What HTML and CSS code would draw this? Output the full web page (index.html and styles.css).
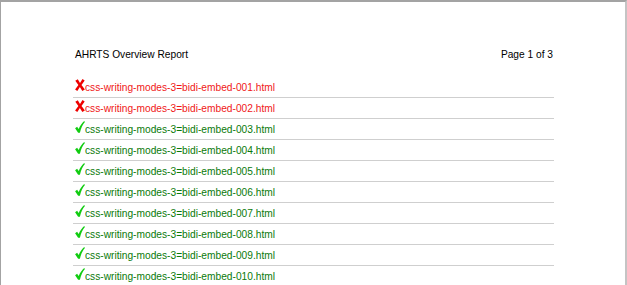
FILE: index.html
```html
<!DOCTYPE html>
<html>
<head>
<meta charset="utf-8">
<title>AHRTS Overview Report</title>
<link rel="stylesheet" href="styles.css">
</head>
<body>
<svg class="defs" width="0" height="0" aria-hidden="true">
  <defs>
    <symbol id="icon-fail" viewBox="0 0 10 12">
      <path d="M0.3 1.8 L2.8 0.2 L5 3.9 L7.5 0.1 L9.7 1.4 L6.5 6 L9.9 10.5 L7.3 12 L4.9 8.1 L2.3 12 L0.1 10.6 L3.4 6 Z"/>
    </symbol>
    <symbol id="icon-pass" viewBox="0 0 10 12">
      <path d="M0.1 7.3 L2.1 5.7 L3.7 8.1 C4.9 5.1 6.8 2.3 9.2 0.1 L9.9 1.1 C7.8 3.6 5.9 7.3 4.9 11.8 L3.1 11.8 Z"/>
    </symbol>
  </defs>
</svg>
<div class="sheet">
  <div class="page">
    <div class="report-head">
      <span class="report-title">AHRTS Overview Report</span>
      <span class="page-no">Page 1 of 3</span>
    </div>
    <ul class="results">
      <li class="result fail"><svg class="mark"><use href="#icon-fail"/></svg><span class="name">css-writing-modes-3=bidi-embed-001.html</span></li>
      <li class="result fail"><svg class="mark"><use href="#icon-fail"/></svg><span class="name">css-writing-modes-3=bidi-embed-002.html</span></li>
      <li class="result pass"><svg class="mark"><use href="#icon-pass"/></svg><span class="name">css-writing-modes-3=bidi-embed-003.html</span></li>
      <li class="result pass"><svg class="mark"><use href="#icon-pass"/></svg><span class="name">css-writing-modes-3=bidi-embed-004.html</span></li>
      <li class="result pass"><svg class="mark"><use href="#icon-pass"/></svg><span class="name">css-writing-modes-3=bidi-embed-005.html</span></li>
      <li class="result pass"><svg class="mark"><use href="#icon-pass"/></svg><span class="name">css-writing-modes-3=bidi-embed-006.html</span></li>
      <li class="result pass"><svg class="mark"><use href="#icon-pass"/></svg><span class="name">css-writing-modes-3=bidi-embed-007.html</span></li>
      <li class="result pass"><svg class="mark"><use href="#icon-pass"/></svg><span class="name">css-writing-modes-3=bidi-embed-008.html</span></li>
      <li class="result pass"><svg class="mark"><use href="#icon-pass"/></svg><span class="name">css-writing-modes-3=bidi-embed-009.html</span></li>
      <li class="result pass"><svg class="mark"><use href="#icon-pass"/></svg><span class="name">css-writing-modes-3=bidi-embed-010.html</span></li>
    </ul>
  </div>
</div>
</body>
</html>
```

FILE: styles.css
```css
html, body {
  margin: 0;
  padding: 0;
  background: #ffffff;
}

body {
  font-family: "Liberation Sans", Arial, sans-serif;
  font-size: 10.2px;
  color: #000000;
}

.defs {
  position: absolute;
  width: 0;
  height: 0;
  overflow: hidden;
}

.sheet {
  box-sizing: border-box;
  width: 627px;
  height: 285px;
  overflow: hidden;
  border-top: 2px solid #a3a3a3;
  border-left: 1px solid #a3a3a3;
  border-right: 2px solid #c4c4c4;
}

.page {
  padding: 0 71px 0 72px;
}

.report-head {
  display: flex;
  justify-content: space-between;
  padding: 46px 1px 0 2px;
  line-height: 13px;
}

.results {
  list-style: none;
  margin: 16px 0 0 0;
  padding: 0;
}

/* 20px row + 1px rule = 21px pitch */
.result {
  display: flex;
  align-items: baseline;
  height: 19px;
  padding: 1px 0 0 2px;
  line-height: 20px;
  border-bottom: 1px solid #cfcfcf;
}

.mark {
  width: 10px;
  height: 12px;
  flex: none;
}

.fail .mark { fill: #ee0000; }
.fail .name { color: #f01818; }

.pass .mark { fill: #11cc11; }
.pass .name { color: #0a7a0a; }
```
